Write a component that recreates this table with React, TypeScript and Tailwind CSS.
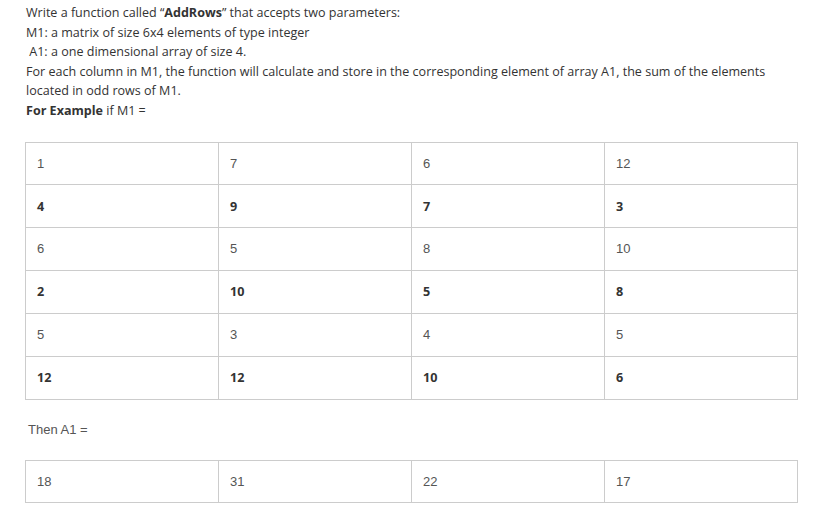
const M1 = [
  [1, 7, 6, 12],
  [4, 9, 7, 3],
  [6, 5, 8, 10],
  [2, 10, 5, 8],
  [5, 3, 4, 5],
  [12, 12, 10, 6],
];

const A1 = [18, 31, 22, 17];

function Cell({ value, bold }: { value: number; bold: boolean }) {
  return (
    <td className="border border-[#cccccc] h-[42.83px] w-[193px] pl-[11px] align-middle">
      {bold ? (
        <span className="font-['Open_Sans',sans-serif] font-bold text-[12.6px] text-[#333333]">{value}</span>
      ) : (
        <span className="font-['Liberation_Sans',Arial,sans-serif] text-[13px] text-[#555555]">{value}</span>
      )}
    </td>
  );
}

export default function App() {
  return (
    <div className="bg-white w-[821px] h-[523px] overflow-hidden pl-[26px] pt-[3px] font-['Open_Sans',sans-serif] text-[12.55px] leading-[19.6px] text-[#333333]">
      <p>
        Write a function called “<b>AddRows</b>” that accepts two parameters:
      </p>
      <p>M1: a matrix of size 6x4 elements of type integer</p>
      <p>&nbsp;A1: a one dimensional array of size 4.</p>
      <p>
        For each column in M1, the function will calculate and store in the corresponding element of array A1, the sum of the elements
      </p>
      <p>located in odd rows of M1.</p>
      <p>
        <b>For Example</b> if M1 =
      </p>

      <table className="border-collapse ml-[-1px] mt-[21px] w-[772px] table-fixed">
        <tbody>
          {M1.map((row, i) => (
            <tr key={i}>
              {row.map((v, j) => (
                <Cell key={j} value={v} bold={i % 2 === 1} />
              ))}
            </tr>
          ))}
        </tbody>
      </table>

      <p className="ml-[2px] mt-[20px] font-['Liberation_Sans',Arial,sans-serif] text-[13px] leading-[20px] text-[#555555]">Then A1 =</p>

      <table className="border-collapse ml-[-1px] mt-[20px] w-[772px] table-fixed">
        <tbody>
          <tr>
            {A1.map((v, j) => (
              <Cell key={j} value={v} bold={false} />
            ))}
          </tr>
        </tbody>
      </table>
    </div>
  );
}
